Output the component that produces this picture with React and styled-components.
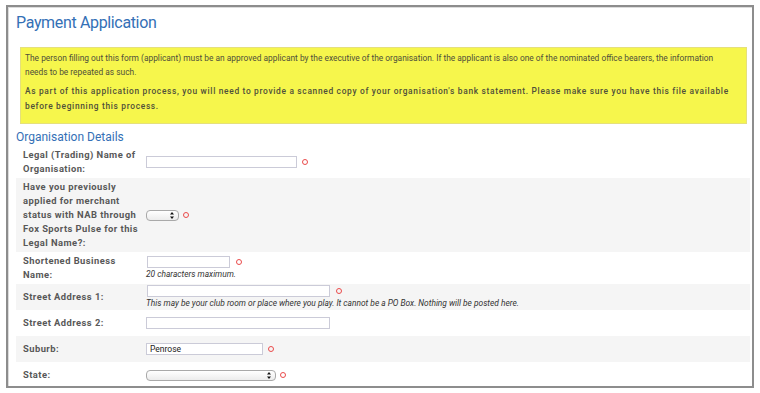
import React from "react";
import styled, { createGlobalStyle } from "styled-components";

const GlobalStyle = createGlobalStyle`
  html, body { margin: 0; padding: 0; background: #ffffff; }
  body { font-family: Roboto, "Liberation Sans", Arial, sans-serif; color: #555; }
`;

const Frame = styled.div`
  box-sizing: border-box;
  margin: 5px 6px 0;
  height: 383px;
  border: 2px solid #8d8d8d;
  box-shadow: inset 1px 1px 0 #dcdcdc;
  overflow: hidden;
  padding: 0 2px 0 8px;
  background: #fff;
`;

const Title = styled.h1`
  margin: 6px 0 0;
  font-size: 16px;
  line-height: 20px;
  font-weight: 400;
  color: #3470b6;
  letter-spacing: -0.35px;
`;

const Notice = styled.div`
  margin: 14px 3px 0 4px;
  background: #f6f64c;
  border: 1px solid #e5e07c;
  padding: 3px 4px 9px;
`;

const NoticeText = styled.p`
  margin: ${(p) => (p.$spaced ? "5px 0 0" : "0")};
  font-size: 8.4px;
  line-height: ${(p) => (p.$spaced ? "15px" : "14px")};
  letter-spacing: ${(p) => (p.$spaced ? "0.68px" : "0")};
  font-weight: ${(p) => (p.$spaced ? 500 : 400)};
  color: #4f4f3a;
  white-space: nowrap;
`;

const SectionTitle = styled.h2`
  margin: 6px 0 0;
  font-size: 12px;
  line-height: 14px;
  font-weight: 400;
  color: #3470b6;
`;

const Form = styled.div`
  margin-top: 2px;
`;

const Row = styled.div`
  display: grid;
  grid-template-columns: 130px 1fr;
  align-items: center;
  min-height: 26px;
  background: ${(p) => (p.$shaded ? "#f5f5f5" : "transparent")};
`;

const Label = styled.div`
  padding: 2px 0 2px 7px;
  font-size: 9.4px;
  line-height: 14px;
  font-weight: 700;
  letter-spacing: 0.45px;
  color: #585858;
`;

const Field = styled.div`
  display: flex;
  flex-direction: column;
  justify-content: center;
  padding: 1px 0;
`;

const Line = styled.div`
  display: flex;
  align-items: center;
`;

const TextInput = styled.input`
  box-sizing: border-box;
  width: ${(p) => p.$w}px;
  height: 12px;
  margin: 0 0 0 ${(p) => p.$x || 0}px;
  padding: 0 3px;
  border: 1px solid #cbcbd8;
  border-radius: 0;
  background: #fff;
  font-family: Roboto, "Liberation Sans", Arial, sans-serif;
  font-size: 8.5px;
  font-weight: 400;
  color: #222;
  outline: none;
`;

const SelectBox = styled.div`
  position: relative;
  box-sizing: border-box;
  width: ${(p) => p.$w}px;
  height: 11px;
  border: 1px solid #a9a9a9;
  border-radius: 4px;
  background: linear-gradient(#ffffff, #ececec);
`;

const Arrows = styled.svg`
  position: absolute;
  right: 4px;
  top: 1px;
`;

const Req = styled.span`
  box-sizing: border-box;
  display: inline-block;
  width: 6px;
  height: 6px;
  margin-left: ${(p) => p.$gap || 5}px;
  border: 1.5px solid #ea4b4b;
  border-radius: 50%;
`;

const Hint = styled.div`
  font-size: 8.4px;
  line-height: 12px;
  font-style: italic;
  color: #333;
`;

function Select({ w }) {
  return (
    <SelectBox $w={w}>
      <Arrows width="4" height="7" viewBox="0 0 4 7">
        <path d="M2 0 L4 2.6 L0 2.6 Z M2 7 L4 4.4 L0 4.4 Z" fill="#111" />
      </Arrows>
    </SelectBox>
  );
}

export default function App() {
  return (
    <>
      <GlobalStyle />
      <Frame>
        <Title>Payment Application</Title>
        <Notice>
          <NoticeText>
            The person filling out this form (applicant) must be an approved applicant by the executive of the organisation. If the applicant is also one of the nominated office bearers, the information
            <br />
            needs to be repeated as such.
          </NoticeText>
          <NoticeText $spaced>
            As part of this application process, you will need to provide a scanned copy of your organisation's bank statement. Please make sure you have this file available
            <br />
            before beginning this process.
          </NoticeText>
        </Notice>
        <SectionTitle>Organisation Details</SectionTitle>
        <Form>
          <Row>
            <Label>
              Legal (Trading) Name of
              <br />
              Organisation:
            </Label>
            <Field>
              <Line>
                <TextInput $w={151} />
                <Req $gap={5} />
              </Line>
            </Field>
          </Row>
          <Row $shaded>
            <Label>
              Have you previously
              <br />
              applied for merchant
              <br />
              status with NAB through
              <br />
              Fox Sports Pulse for this
              <br />
              Legal Name?:
            </Label>
            <Field>
              <Line>
                <Select w={33} />
                <Req $gap={4} />
              </Line>
            </Field>
          </Row>
          <Row>
            <Label>
              Shortened Business
              <br />
              Name:
            </Label>
            <Field>
              <Line>
                <TextInput $w={83} $x={1} />
                <Req $gap={6} />
              </Line>
              <Hint>20 characters maximum.</Hint>
            </Field>
          </Row>
          <Row $shaded>
            <Label>Street Address 1:</Label>
            <Field>
              <Line>
                <TextInput $w={183} $x={1} />
                <Req $gap={6} />
              </Line>
              <Hint>This may be your club room or place where you play. It cannot be a PO Box. Nothing will be posted here.</Hint>
            </Field>
          </Row>
          <Row>
            <Label>Street Address 2:</Label>
            <Field>
              <Line>
                <TextInput $w={184} />
              </Line>
            </Field>
          </Row>
          <Row $shaded>
            <Label>Suburb:</Label>
            <Field>
              <Line>
                <TextInput $w={117} defaultValue="Penrose" />
                <Req $gap={5} />
              </Line>
            </Field>
          </Row>
          <Row>
            <Label>State:</Label>
            <Field>
              <Line>
                <Select w={130} />
                <Req $gap={4} />
              </Line>
            </Field>
          </Row>
        </Form>
      </Frame>
    </>
  );
}
